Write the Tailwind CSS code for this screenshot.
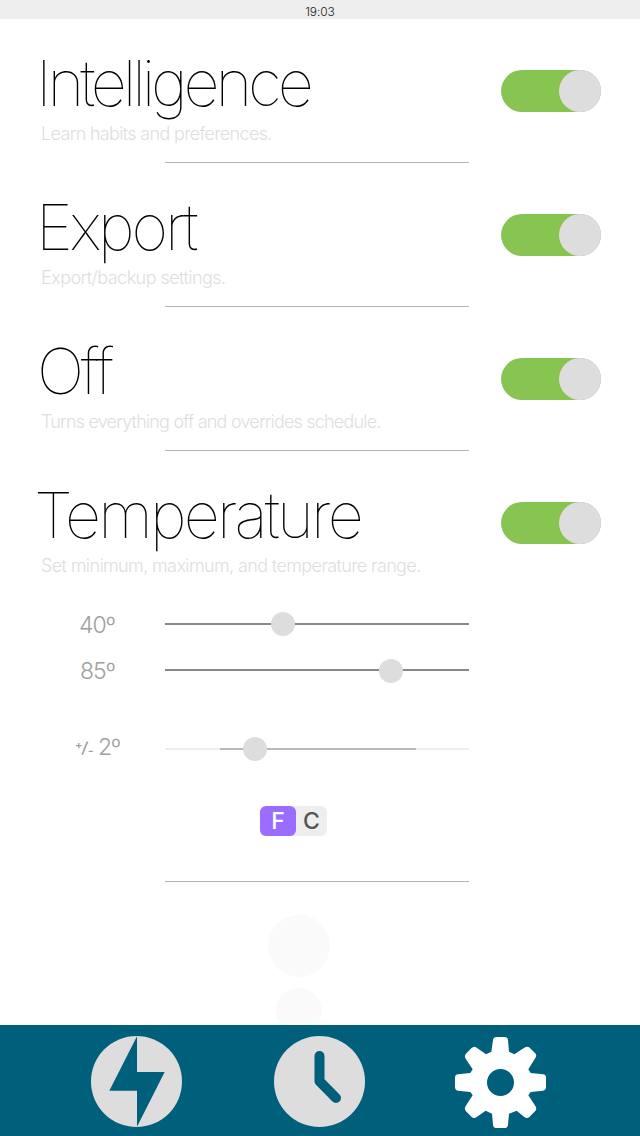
<!DOCTYPE html>
<html lang="en">
<head>
<meta charset="utf-8">
<title>Settings</title>
<script src="https://cdn.jsdelivr.net/npm/@tailwindcss/browser@4"></script>
</head>
<body class="w-[640px] h-[1136px] overflow-hidden bg-white flex flex-col font-['Inter','Liberation_Sans',sans-serif]">
<header class="h-[19px] shrink-0 bg-[#eee] text-center text-[12px] leading-[24px] font-light tracking-[-0.1px] text-[#222]">19:03</header>
<main class="h-[1006px] shrink-0 overflow-hidden">
  <section class="h-[144px] flex flex-col">
    <div class="h-[143px] flex justify-between pl-[41px] pr-[39px]">
      <div class="pt-[26px] whitespace-nowrap">
        <h2 class="h-[76px] text-[63px] leading-[76px] font-thin text-black tracking-[-4.15px] -ml-[5px]">Intelligence</h2>
        <p class="text-[18px] leading-[26px] font-light text-[#dedede] tracking-[-0.67px]">Learn habits and preferences.</p>
      </div>
      <div class="mt-[51px] h-[41.5px] w-[100px] rounded-full bg-[#88c452] flex justify-end"><span class="h-[41.5px] w-[42px] rounded-full bg-[#ddd]"></span></div>
    </div>
    <div class="h-px w-[304px] ml-[165px] bg-[#b3b3b3]"></div>
  </section>
  <section class="h-[144px] flex flex-col">
    <div class="h-[143px] flex justify-between pl-[41px] pr-[39px]">
      <div class="pt-[26px] whitespace-nowrap">
        <h2 class="h-[76px] text-[63px] leading-[76px] font-thin text-black tracking-[-3.1px] -ml-[5px]">Export</h2>
        <p class="text-[18px] leading-[26px] font-light text-[#dedede] tracking-[-0.55px]">Export/backup settings.</p>
      </div>
      <div class="mt-[51px] h-[41.5px] w-[100px] rounded-full bg-[#88c452] flex justify-end"><span class="h-[41.5px] w-[42px] rounded-full bg-[#ddd]"></span></div>
    </div>
    <div class="h-px w-[304px] ml-[165px] bg-[#b3b3b3]"></div>
  </section>
  <section class="h-[144px] flex flex-col">
    <div class="h-[143px] flex justify-between pl-[41px] pr-[39px]">
      <div class="pt-[26px] whitespace-nowrap">
        <h2 class="h-[76px] text-[63px] leading-[76px] font-thin text-black tracking-[-3.2px] -ml-[4px]">Off</h2>
        <p class="text-[18px] leading-[26px] font-light text-[#dedede] tracking-[-0.81px]">Turns everything off and overrides schedule.</p>
      </div>
      <div class="mt-[51px] h-[41.5px] w-[100px] rounded-full bg-[#88c452] flex justify-end"><span class="h-[41.5px] w-[42px] rounded-full bg-[#ddd]"></span></div>
    </div>
    <div class="h-px w-[304px] ml-[165px] bg-[#b3b3b3]"></div>
  </section>
  <section class="h-[431px] flex flex-col">
    <div class="h-[143px] shrink-0 flex justify-between pl-[41px] pr-[39px]">
      <div class="pt-[26px] whitespace-nowrap">
        <h2 class="h-[76px] text-[63px] leading-[76px] font-thin text-black tracking-[-2.85px] -ml-[7px]">Temperature</h2>
        <p class="text-[18px] leading-[26px] font-light text-[#dedede] tracking-[-0.62px]">Set minimum, maximum, and temperature range.</p>
      </div>
      <div class="mt-[51px] h-[41.5px] w-[100px] rounded-full bg-[#88c452] flex justify-end"><span class="h-[41.5px] w-[42px] rounded-full bg-[#ddd]"></span></div>
    </div>
    <div class="h-[46px] shrink-0 mt-[7px] flex items-center">
      <div class="w-[165px] pl-[79px] pt-[2px] text-[23px] font-light tracking-[-1px] text-[#a0a0a0]">40º</div>
      <div class="w-[304px] h-6 flex items-center"><div class="h-[2px] w-[118px] bg-[#888]"></div><div class="size-6 -mx-3 rounded-full bg-[#ddd] z-10"></div><div class="h-[2px] flex-1 bg-[#888]"></div></div>
    </div>
    <div class="h-[46px] shrink-0 flex items-center">
      <div class="w-[165px] pl-[80px] pt-[2px] text-[23px] font-light tracking-[-1px] text-[#a0a0a0]">85º</div>
      <div class="w-[304px] h-6 flex items-center"><div class="h-[2px] w-[226px] bg-[#888]"></div><div class="size-6 -mx-3 mt-[2px] rounded-full bg-[#ddd] z-10"></div><div class="h-[2px] flex-1 bg-[#888]"></div></div>
    </div>
    <div class="h-[46px] shrink-0 mt-[33px] flex items-center">
      <div class="w-[165px] pl-[75px] flex items-center text-[#a0a0a0] -mt-[3px]">
        <span class="flex items-start h-[22px] leading-[20px] w-[23px] font-semibold"><span class="text-[11px] w-[7px] -mt-[2px]">+</span><span class="text-[15px] w-[6px] mt-px skew-x-[-8deg]">/</span><span class="mt-[4px] text-[12px]">-</span></span>
        <span class="text-[23px] font-light tracking-[-1px]">2º</span>
      </div>
      <div class="w-[304px] h-6 flex items-center"><div class="h-[2px] w-[55px] bg-[#eee]"></div><div class="h-[2px] w-[35px] bg-[#b8b8b8]"></div><div class="size-6 -mx-3 rounded-full bg-[#ddd] z-10"></div><div class="h-[2px] w-[161px] bg-[#b8b8b8]"></div><div class="h-[2px] flex-1 bg-[#eee]"></div></div>
    </div>
    <div class="mt-[34px] ml-[260px] w-[67px] h-[30px] shrink-0 rounded-[6px] bg-[#eee] flex text-[23px] leading-[30px] text-center">
      <span class="w-9 rounded-[6px] bg-[#9b6dff] text-white font-medium">F</span><span class="flex-1 text-[#555] font-medium">C</span>
    </div>
    <div class="h-px w-[304px] mt-[45px] ml-[165px] bg-[#b3b3b3]"></div>
  </section>
  <div class="flex flex-col items-center w-[62px] ml-[268px] mt-[33px] gap-[11px]">
    <div class="size-[62px] rounded-full bg-[#fafafa]"></div>
    <div class="size-[46px] rounded-full bg-[#fafafa]"></div>
  </div>
</main>
<nav class="h-[111px] shrink-0 bg-[#005f7a] flex pt-[11px] pl-[91px]">
  <svg class="size-[91px]" viewBox="33 48 273 273"><circle cx="169.500" cy="184.500" r="136.500" fill="#ddd"/><path d="M171 49 88 212H171V320L254 156H171Z" fill="#005f7a"/></svg>
  <svg class="size-[91px] ml-[92px]" viewBox="42 48 273 273"><circle cx="178.500" cy="184.500" r="136.500" fill="#ddd"/><path d="M178.500 108V184L228 234" fill="none" stroke="#005f7a" stroke-width="30" stroke-linecap="round" stroke-linejoin="round"/></svg>
  <svg class="size-[91px] ml-[90px] mt-px" viewBox="45 51 273 273"><path fill="#fff" fill-rule="evenodd" d="M170 51H193Q203 51 204 60L207 95 223 103 253 83Q262 77 269 83L285 99Q292 106 286 114L265 148 272 159 309 163Q318 164 318 173V202Q318 211 309 212L272 216 265 226 286 258Q292 267 285 274L269 290Q261 297 253 291L230 272 207 281 204 314Q203 324 193 324H170Q160 324 159 314L156 281 137 272 110 291Q102 297 94 290L78 274Q72 267 77 258L98 226 91 216 54 212Q45 211 45 202V173Q45 164 54 163L91 159 98 148 77 116Q72 108 78 101L94 85Q102 77 110 83L138 103 154 95 159 60Q160 51 170 51ZM181.500 147A40.500 40.500 0 1 0 181.500 228 40.500 40.500 0 1 0 181.500 147Z"/></svg>
</nav>
</body>
</html>
